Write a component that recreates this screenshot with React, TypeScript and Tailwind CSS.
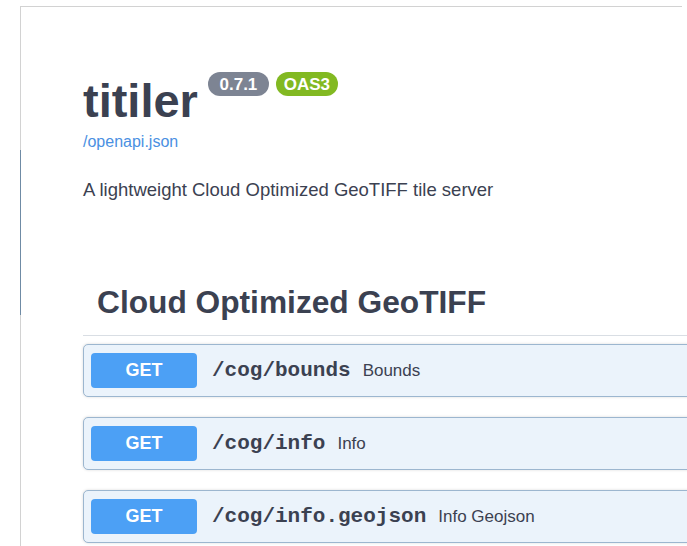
import React from 'react';

type Route = { path: string; summary: string };

const routes: Route[] = [
  { path: '/cog/bounds', summary: 'Bounds' },
  { path: '/cog/info', summary: 'Info' },
  { path: '/cog/info.geojson', summary: 'Info Geojson' },
];

function Badge({ label, color, width }: { label: string; color: string; width: string }) {
  return (
    <span
      className={`${color} ${width} inline-flex h-[24px] items-center justify-center rounded-full text-[17px] font-bold leading-none text-white`}
    >
      {label}
    </span>
  );
}

function Operation({ route }: { route: Route }) {
  return (
    <div className="flex w-[640px] items-center rounded-[5px] border border-[#9cb6cf] bg-[#ebf3fb] py-[8px] pl-[7px] shadow-[0_0_3px_rgba(0,0,0,0.15)]">
      <span className="flex h-[35px] w-[106px] items-center justify-center rounded-[4px] bg-[#4ca0f5] text-[18px] font-bold text-white">
        GET
      </span>
      <span className="ml-[15px] font-['Liberation_Mono',monospace] text-[21px] font-bold text-[#3b4151]">
        {route.path}
      </span>
      <span className="ml-[12px] text-[17px] text-[#3b4151]">{route.summary}</span>
    </div>
  );
}

export default function App() {
  return (
    <div className="h-[546px] w-[687px] overflow-hidden bg-white pl-[20px] pt-[6px] font-['Liberation_Sans',Arial,sans-serif] text-[#3b4151]">
      <div className="relative h-[600px] w-[662px] border-l border-t border-[#d2d2d2] pl-[62px]">
        {/* darker stretch of the frame edge */}
        <div className="absolute left-[-1px] top-[143px] h-[165px] w-px bg-[#6f8ba5]" />

        {/* info block */}
        <div className="mt-[68px] flex items-start">
          <h1 className="text-[47px] font-bold leading-[52px]">titiler</h1>
          <div className="ml-[10px] mt-[-3px] flex gap-[7px]">
            <Badge label="0.7.1" color="bg-[#7d8493]" width="w-[61px]" />
            <Badge label="OAS3" color="bg-[#82b922]" width="w-[62px]" />
          </div>
        </div>
        <a className="mt-[5px] block text-[16px] leading-[20px] text-[#4a90e2]">/openapi.json</a>
        <p className="mt-[26px] text-[18.5px] leading-[24px]">A lightweight Cloud Optimized GeoTIFF tile server</p>

        {/* tag section */}
        <div className="mt-[80px]">
          <h2 className="w-[640px] border-b border-[#d9dee4] pb-[13px] pl-[14px] text-[31.7px] font-bold leading-[40px]">
            Cloud Optimized GeoTIFF
          </h2>
          <div className="mt-[8px] flex flex-col gap-[20px]">
            {routes.map((r) => (
              <Operation key={r.path} route={r} />
            ))}
          </div>
        </div>
      </div>
    </div>
  );
}
